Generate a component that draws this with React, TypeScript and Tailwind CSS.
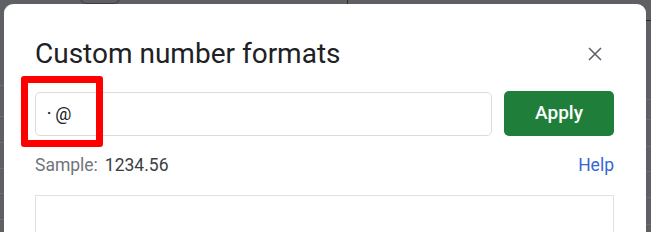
import React from "react";

function Strip({ lines, width }: { lines: number[]; width: string }) {
  return (
    <div className={`flex flex-col shrink-0 ${width}`}>
      {lines.map((h, i) => (
        <div key={i} className="border-b border-[#6e6f73]" style={{ height: h }} />
      ))}
    </div>
  );
}

export default function App() {
  return (
    <div
      className="relative w-[651px] h-[232px] overflow-hidden bg-[#5f6064] flex flex-col"
      style={{ fontFamily: "Roboto, 'Liberation Sans', sans-serif" }}
    >
      {/* top strip of the sheet behind */}
      <div className="h-[4px] shrink-0 flex items-end pl-[80px] gap-[227px]">
        <div className="w-[40px] h-[12px] rounded-[6px] border border-[#3c3d40]" />
        <div className="w-[1px] h-[4px] bg-[#2b2b2b]" />
      </div>

      <div className="flex flex-1">
        <Strip width="w-[4px]" lines={[82, 31, 26, 26, 25, 26, 30]} />

        {/* dialog */}
        <div className="w-[642px] h-[260px] bg-white rounded-[9px] pl-[31px] pr-[32px] pt-[32px]">
          <div className="flex items-center justify-between">
            <div className="text-[28px] leading-[36px] text-[#202124]">Custom number formats</div>
            <svg width="14" height="14" viewBox="0 0 14 14" className="mr-[12px]">
              <path d="M1 1 L13 13 M13 1 L1 13" stroke="#5f6368" strokeWidth="1.6" />
            </svg>
          </div>
          <div className="flex items-center gap-[12px] mt-[19px]">
            <div className="flex-1 h-[44px] rounded-[5px] border border-[#dadce0] flex items-center pl-[11px] text-[18px] text-[#202124]">
              <span className="text-[14px] font-bold mr-[4px]">·</span>
              <span>@</span>
            </div>
            <div className="w-[110px] h-[45px] rounded-[5px] bg-[#1e7e3a] text-white text-[19px] font-medium flex items-center justify-center">
              Apply
            </div>
          </div>
          <div className="flex items-center justify-between mt-[19px] text-[17.5px] leading-[21px]">
            <div>
              <span className="text-[#70757a]">Sample:</span>
              <span className="ml-[7px] text-[#3c4043]">1234.56</span>
            </div>
            <div className="text-[#3367d6]">Help</div>
          </div>
          <div className="mt-[19px] h-[80px] border border-[#e0e0e0]" />
        </div>

        <div className="flex-1 flex flex-col">
          <div className="h-[13px] mt-[4px] border-b border-[#2b2b2b]" />
          <Strip width="w-full" lines={[79, 20, 27, 25, 26, 27]} />
        </div>
      </div>

      {/* red annotation box */}
      <div className="absolute left-[21px] top-[76px] w-[82px] h-[71px] border-[7px] border-[#ff0000] rounded-[3px]" />
    </div>
  );
}
